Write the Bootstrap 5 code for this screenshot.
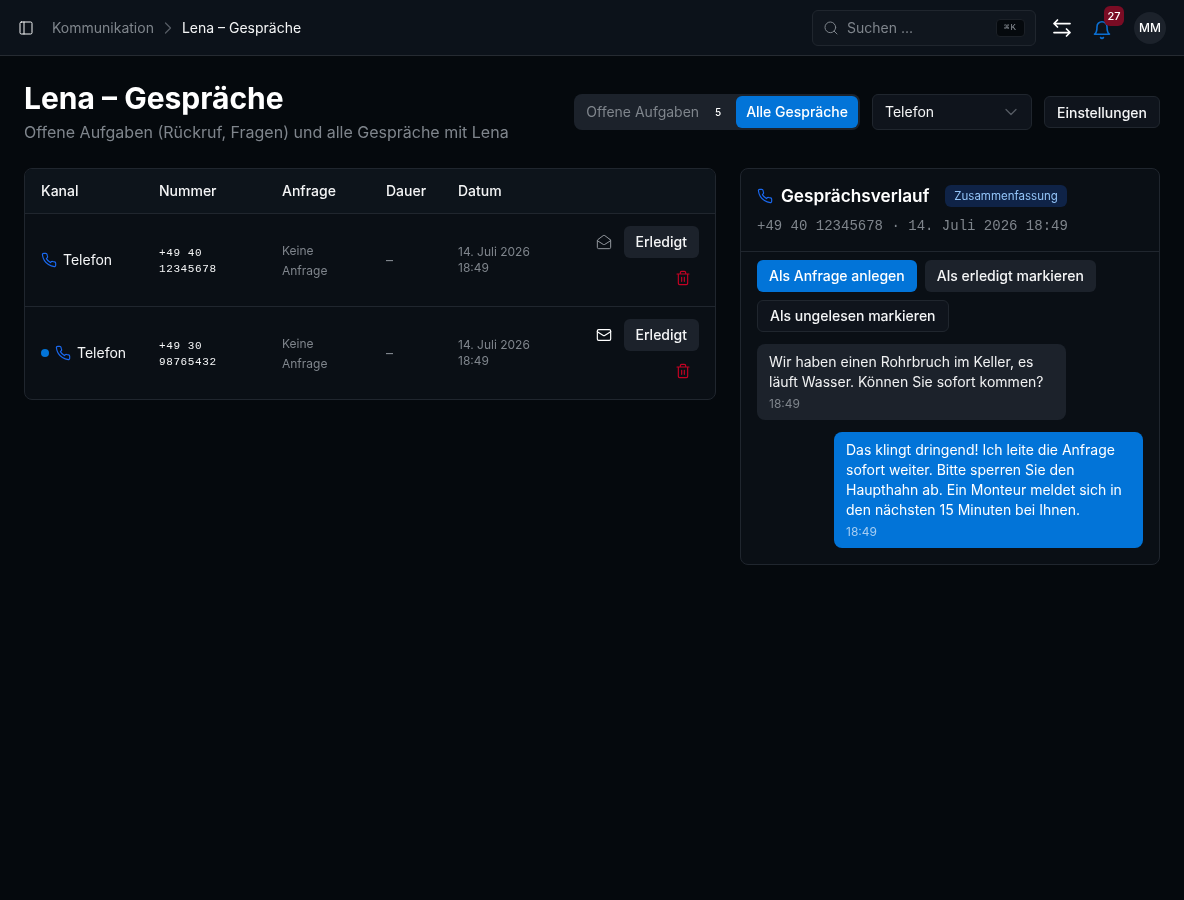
<!DOCTYPE html>
<html lang="de">

<head>
    <meta charset="UTF-8">
    <meta name="viewport" content="width=device-width, initial-scale=1.0">
    <title>Lena – Gespräche</title>
    <link href="https://cdn.jsdelivr.net/npm/bootstrap@5.3.0/dist/css/bootstrap.min.css" rel="stylesheet">
    <style>
        body {
            background: #05090d;
            color: #f4f5f6;
            font-family: "Inter", "Liberation Sans", sans-serif;
            font-size: 14px;
            min-height: 900px;
        }

        .app-root { will-change: transform; }

        .ico {
            fill: none;
            stroke: currentColor;
            stroke-width: 1.5;
            stroke-linecap: round;
            stroke-linejoin: round;
            flex-shrink: 0;
        }

        .topbar {
            height: 56px;
            background: #0c121a;
            border-bottom: 1px solid #262b32;
            padding: 0 18px;
        }

        .crumb-muted { color: #7f858c; }
        .crumb-start { margin-left: 2px; }
        .crumb-sep { color: #565c64; margin: 0 9px; }
        .crumb-now { color: #f4f5f6; }

        .search-box {
            width: 224px;
            height: 36px;
            background: #10161e;
            border: 1px solid #20262e;
            border-radius: 6px;
            padding: 0 10px;
            color: #7f858c;
            margin-right: 14px;
        }

        .kbd-hint {
            width: 29px;
            height: 18px;
            background: #05090d;
            border: 1px solid #1b2027;
            border-radius: 4px;
            font-size: 9px;
            line-height: 16px;
            letter-spacing: 1px;
            text-align: center;
            color: #8a9097;
            font-family: "Liberation Mono", monospace;
        }

        .swap-ico { stroke-width: 1.75; color: #fff; }

        .bell-wrap { width: 20px; height: 20px; margin: 0 22px 0 18px; color: #0b6fd2; }
        .bell-wrap .ico { stroke-width: 1.9; }

        .bell-count {
            position: absolute;
            top: -12px;
            left: 12px;
            width: 20px;
            height: 20px;
            border-radius: 6px;
            background: #7a0c24;
            color: #fff;
            font-size: 11px;
            font-weight: 500;
            line-height: 20px;
            text-align: center;
        }

        .avatar-mm {
            width: 32px;
            height: 32px;
            border-radius: 50%;
            background: #1c222b;
            font-size: 12px;
            font-weight: 500;
            line-height: 32px;
            text-align: center;
            color: #fff;
        }

        .page-head { padding: 24px 24px 0; height: 112px; }
        .page-head h1 { font-size: 30px; line-height: 36px; font-weight: 700; margin: 0; color: #fff; }
        .page-sub { font-size: 16px; line-height: 24px; color: #7f858c; margin-top: 4px; }

        .switcher {
            height: 36px;
            background: #1c222b;
            border-radius: 8px;
            padding: 2px;
            margin-top: 14px;
        }

        .switcher-off { color: #7f858c; padding: 0 7px 2px 10px; }
        .switcher-count { color: #fff; font-size: 10px; font-weight: 500; width: 24px; margin-right: 6px; text-align: center; }

        .switcher-on {
            background: #0274d8;
            color: #fff;
            height: 32px;
            line-height: 32px;
            border-radius: 6px;
            padding: 0 10px;
            font-weight: 500;
        }

        .kanal-select {
            width: 160px;
            height: 36px;
            margin: 14px 12px 0;
            background: #0f141c;
            border: 1px solid #20262e;
            border-radius: 6px;
            padding: 0 12px;
            color: #f4f5f6;
        }

        .kanal-label { padding-bottom: 2px; }
        .select-arrow { color: #565c64; margin-right: -2px; }

        .btn.btn-plain {
            background: #0f141c;
            border: 1px solid #20262e;
            color: #f4f5f6;
            font-size: 14px;
            font-weight: 500;
            border-radius: 6px;
            padding: 0 12px;
            height: 32px;
        }

        .btn.btn-soft {
            background: #1c222b;
            border: 0;
            color: #f4f5f6;
            font-size: 14px;
            font-weight: 500;
            border-radius: 6px;
            padding: 0 12px;
            height: 32px;
        }

        .btn.btn-main {
            background: #0274d8;
            border: 0;
            color: #fff;
            font-size: 14px;
            font-weight: 500;
            border-radius: 6px;
            padding: 0 12px;
            height: 32px;
        }

        .columns { padding: 0 24px; gap: 24px; }

        .panel {
            background: #0a0f15;
            border: 1px solid #20262e;
            border-radius: 8px;
            overflow: hidden;
        }

        .calls-panel { width: 692px; }
        .chat-panel { width: 420px; }

        .calls-table { width: 100%; table-layout: fixed; border-collapse: collapse; }
        .calls-table th {
            height: 44px;
            background: #0d141b;
            font-weight: 500;
            padding: 0 0 0 16px;
            color: #f4f5f6;
        }
        .calls-table td {
            height: 93px;
            padding: 0 0 0 16px;
            border-top: 1px solid #20262e;
        }
        .calls-table td.actions-cell { vertical-align: top; padding-top: 12px; }
        .calls-table td.num-text,
        .calls-table td.muted-sm { padding-top: 2px; }

        .w-kanal { width: 118px; }
        .w-nummer { width: 123px; }
        .w-anfrage { width: 104px; }
        .w-dauer { width: 72px; }
        .w-datum { width: 134px; }

        .phone-ico { color: #1a68ee; stroke-width: 1.75; }
        .unread-dot { width: 8px; height: 8px; border-radius: 50%; background: #0274d8; margin-right: 6px; }
        .phone-gap { margin-right: 6px; }
        .num-text { font-family: "Liberation Mono", monospace; font-size: 11px; letter-spacing: .6px; line-height: 16px; color: #f4f5f6; }
        .muted-sm { font-size: 12px; line-height: 20px; color: #7f858c; }
        .date-sm { font-size: 12px; line-height: 16px; color: #7f858c; }
        .row-actions { padding-right: 16px; }
        .trash-ico { color: #c40224; stroke-width: 1.75; margin: 12px 8px 0 0; }
        .read-ico { color: #92979d; }
        .unread-ico { color: #fff; stroke-width: 1.75; }

        .chat-head { padding: 16px 16px 15px; border-bottom: 1px solid #20262e; }
        .chat-title { font-size: 17.2px; line-height: 22px; font-weight: 600; color: #fff; }
        .tag-blue {
            background: #0f2347;
            color: #93c4f8;
            font-size: 11.5px;
            line-height: 22px;
            padding: 0 9px;
            border-radius: 6px;
        }
        .chat-meta { font-family: "Liberation Mono", monospace; font-size: 14px; line-height: 20px; color: #7f858c; margin-top: 9px; }

        .chat-actions { padding: 8px 16px 0; gap: 8px; }
        .chat-actions .btn.btn-main,
        .chat-actions .btn.btn-soft,
        .chat-actions .btn.btn-plain { padding-bottom: 2px; }

        .bubble { border-radius: 8px; padding: 8px 12px; line-height: 20px; }
        .bubble-in { background: #1c222b; width: 309px; margin: 12px 0 0 16px; color: #f0f1f2; }
        .bubble-out { background: #0274d8; width: 309px; margin: 12px 16px 16px auto; color: #fff; }
        .bubble-time { font-size: 12px; line-height: 17px; color: #7f858c; margin-top: 3px; }
        .bubble-out .bubble-time { color: #a6cdf2; }
    </style>
</head>

<body>
    <svg width="0" height="0" class="d-block position-absolute">
        <symbol id="i-phone" viewBox="0 0 24 24"><path d="M22 16.92v3a2 2 0 0 1-2.18 2 19.79 19.79 0 0 1-8.63-3.07 19.5 19.5 0 0 1-6-6 19.79 19.79 0 0 1-3.07-8.67A2 2 0 0 1 4.11 2h3a2 2 0 0 1 2 1.72 12.84 12.84 0 0 0 .7 2.81 2 2 0 0 1-.45 2.11L8.09 9.91a16 16 0 0 0 6 6l1.27-1.27a2 2 0 0 1 2.11-.45 12.84 12.84 0 0 0 2.81.7A2 2 0 0 1 22 16.92z"/></symbol>
        <symbol id="i-trash" viewBox="0 0 24 24"><path d="M3 6h18M19 6v14c0 1-1 2-2 2H7c-1 0-2-1-2-2V6M8 6V4c0-1 1-2 2-2h4c1 0 2 1 2 2v2M10 11v6M14 11v6"/></symbol>
    </svg>

    <div class="app-root">
    <!-- Barra superior -->
    <header class="topbar d-flex align-items-center">
        <svg class="ico me-3" width="16" height="16" viewBox="0 0 24 24"><rect x="3" y="3" width="18" height="18" rx="2"/><path d="M9 3v18"/></svg>
        <span class="crumb-muted crumb-start">Kommunikation</span>
        <svg class="ico crumb-sep" width="10" height="14" viewBox="6 4 12 16"><path d="m9 18 6-6-6-6"/></svg>
        <span class="crumb-now">Lena – Gespräche</span>

        <div class="search-box d-flex align-items-center ms-auto">
            <svg class="ico me-2" width="16" height="16" viewBox="0 0 24 24"><circle cx="11" cy="11" r="8"/><path d="m21 21-4.3-4.3"/></svg>
            <span class="flex-grow-1">Suchen ...</span>
            <span class="kbd-hint">⌘K</span>
        </div>
        <svg class="ico swap-ico" width="24" height="24" viewBox="0 0 24 24"><path d="M7.5 4 4 7.5 7.5 11M4 7.5h16M16.5 13l3.5 3.5-3.5 3.5M20 16.5H4"/></svg>
        <div class="bell-wrap position-relative">
            <svg class="ico" width="20" height="20" viewBox="0 0 24 24"><path d="M6 8a6 6 0 0 1 12 0c0 7 3 9 3 9H3s3-2 3-9M10.3 21a1.94 1.94 0 0 0 3.4 0"/></svg>
            <span class="bell-count">27</span>
        </div>
        <div class="avatar-mm">MM</div>
    </header>

    <!-- Titel und Filter -->
    <section class="page-head d-flex justify-content-between align-items-start">
        <div>
            <h1>Lena – Gespräche</h1>
            <div class="page-sub">Offene Aufgaben (Rückruf, Fragen) und alle Gespräche mit Lena</div>
        </div>
        <div class="d-flex align-items-start">
            <div class="switcher d-flex align-items-center">
                <span class="switcher-off">Offene Aufgaben</span>
                <span class="switcher-count">5</span>
                <span class="switcher-on">Alle Gespräche</span>
            </div>
            <div class="kanal-select d-flex align-items-center justify-content-between">
                <span class="kanal-label">Telefon</span>
                <svg class="ico select-arrow" width="20" height="20" viewBox="0 0 24 24"><path d="m6 9 6 6 6-6"/></svg>
            </div>
            <button type="button" class="btn btn-plain mt-3">Einstellungen</button>
        </div>
    </section>

    <main class="columns d-flex align-items-start">
        <!-- Tabelle -->
        <div class="panel calls-panel">
            <table class="calls-table">
                <thead>
                    <tr>
                        <th class="w-kanal">Kanal</th>
                        <th class="w-nummer">Nummer</th>
                        <th class="w-anfrage">Anfrage</th>
                        <th class="w-dauer">Dauer</th>
                        <th class="w-datum">Datum</th>
                        <th></th>
                    </tr>
                </thead>
                <tbody>
                    <tr>
                        <td>
                            <div class="d-flex align-items-center">
                                <svg class="ico phone-ico phone-gap" width="16" height="16"><use href="#i-phone"/></svg>
                                <span>Telefon</span>
                            </div>
                        </td>
                        <td class="num-text">+49 40<br>12345678</td>
                        <td class="muted-sm">Keine<br>Anfrage</td>
                        <td class="crumb-muted">–</td>
                        <td class="date-sm">14. Juli 2026<br>18:49</td>
                        <td class="actions-cell">
                            <div class="row-actions d-flex flex-column align-items-end">
                                <div class="d-flex align-items-center gap-2">
                                    <svg class="ico read-ico me-1" width="16" height="16" viewBox="0 0 24 24"><path d="M21.2 8.4c.5.38.8.97.8 1.6v10a2 2 0 0 1-2 2H4a2 2 0 0 1-2-2V10a2 2 0 0 1 .8-1.6l8-6a2 2 0 0 1 2.4 0l8 6ZM22 10l-8.97 5.7a1.94 1.94 0 0 1-2.06 0L2 10"/></svg>
                                    <button type="button" class="btn btn-soft">Erledigt</button>
                                </div>
                                <svg class="ico trash-ico" width="16" height="16"><use href="#i-trash"/></svg>
                            </div>
                        </td>
                    </tr>
                    <tr>
                        <td>
                            <div class="d-flex align-items-center">
                                <span class="unread-dot"></span>
                                <svg class="ico phone-ico phone-gap" width="16" height="16"><use href="#i-phone"/></svg>
                                <span>Telefon</span>
                            </div>
                        </td>
                        <td class="num-text">+49 30<br>98765432</td>
                        <td class="muted-sm">Keine<br>Anfrage</td>
                        <td class="crumb-muted">–</td>
                        <td class="date-sm">14. Juli 2026<br>18:49</td>
                        <td class="actions-cell">
                            <div class="row-actions d-flex flex-column align-items-end">
                                <div class="d-flex align-items-center gap-2">
                                    <svg class="ico unread-ico me-1" width="16" height="16" viewBox="0 0 24 24"><rect x="2" y="4" width="20" height="16" rx="2"/><path d="m22 7-8.97 5.7a1.94 1.94 0 0 1-2.06 0L2 7"/></svg>
                                    <button type="button" class="btn btn-soft">Erledigt</button>
                                </div>
                                <svg class="ico trash-ico" width="16" height="16"><use href="#i-trash"/></svg>
                            </div>
                        </td>
                    </tr>
                </tbody>
            </table>
        </div>

        <!-- Gesprächsverlauf -->
        <aside class="panel chat-panel">
            <div class="chat-head">
                <div class="d-flex align-items-center">
                    <svg class="ico phone-ico me-2" width="16" height="16"><use href="#i-phone"/></svg>
                    <span class="chat-title">Gesprächsverlauf</span>
                    <span class="tag-blue ms-3">Zusammenfassung</span>
                </div>
                <div class="chat-meta">+49 40 12345678 · 14. Juli 2026 18:49</div>
            </div>
            <div class="chat-actions d-flex flex-wrap">
                <button type="button" class="btn btn-main">Als Anfrage anlegen</button>
                <button type="button" class="btn btn-soft">Als erledigt markieren</button>
                <button type="button" class="btn btn-plain">Als ungelesen markieren</button>
            </div>
            <div class="bubble bubble-in">
                Wir haben einen Rohrbruch im Keller, es läuft Wasser. Können Sie sofort kommen?
                <div class="bubble-time">18:49</div>
            </div>
            <div class="bubble bubble-out">
                Das klingt dringend! Ich leite die Anfrage sofort weiter. Bitte sperren Sie den Haupthahn ab. Ein Monteur meldet sich in den nächsten 15 Minuten bei Ihnen.
                <div class="bubble-time">18:49</div>
            </div>
        </aside>
    </main>
    </div>

    <script src="https://cdn.jsdelivr.net/npm/bootstrap@5.3.0/dist/js/bootstrap.bundle.min.js"></script>
</body>

</html>
